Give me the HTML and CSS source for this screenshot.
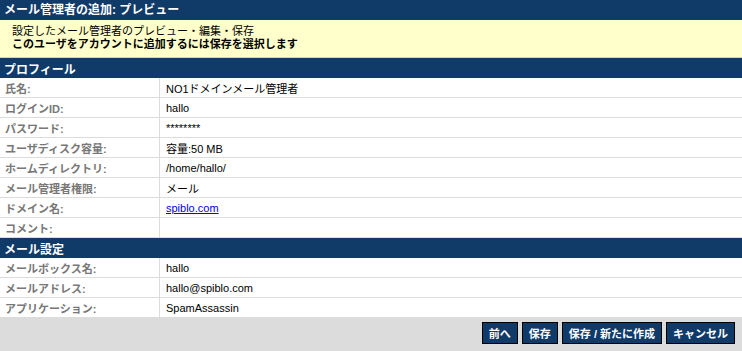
FILE: index.html
```html
<!DOCTYPE html>
<html lang="ja">

<head>
    <meta charset="UTF-8">
    <meta name="viewport" content="width=device-width, initial-scale=1.0">
    <title>メール管理者の追加: プレビュー</title>
    <link rel="stylesheet" href="styles.css">
</head>

<body>
    <div class="page-title">メール管理者の追加: プレビュー</div>

    <div class="notice">
        <p>設定したメール管理者のプレビュー・編集・保存</p>
        <p class="strong">このユーザをアカウントに追加するには保存を選択します</p>
    </div>

    <table class="preview">
        <tr class="section">
            <th colspan="2">プロフィール</th>
        </tr>
        <tr>
            <td class="label">氏名:</td>
            <td class="value">NO1ドメインメール管理者</td>
        </tr>
        <tr>
            <td class="label">ログインID:</td>
            <td class="value">hallo</td>
        </tr>
        <tr>
            <td class="label">パスワード:</td>
            <td class="value">********</td>
        </tr>
        <tr>
            <td class="label">ユーザディスク容量:</td>
            <td class="value">容量:50 MB</td>
        </tr>
        <tr>
            <td class="label">ホームディレクトリ:</td>
            <td class="value">/home/hallo/</td>
        </tr>
        <tr>
            <td class="label">メール管理者権限:</td>
            <td class="value">メール</td>
        </tr>
        <tr>
            <td class="label">ドメイン名:</td>
            <td class="value"><a href="#">spiblo.com</a></td>
        </tr>
        <tr>
            <td class="label">コメント:</td>
            <td class="value"></td>
        </tr>
        <tr class="section">
            <th colspan="2">メール設定</th>
        </tr>
        <tr>
            <td class="label">メールボックス名:</td>
            <td class="value">hallo</td>
        </tr>
        <tr>
            <td class="label">メールアドレス:</td>
            <td class="value">hallo@spiblo.com</td>
        </tr>
        <tr>
            <td class="label">アプリケーション:</td>
            <td class="value">SpamAssassin</td>
        </tr>
    </table>

    <div class="actions">
        <button class="btn">前へ</button>
        <button class="btn">保存</button>
        <button class="btn">保存 / 新たに作成</button>
        <button class="btn">キャンセル</button>
    </div>
</body>

</html>
```

FILE: styles.css
```css
body {
    margin: 0;
    font-family: 'Liberation Sans', 'Noto Sans CJK JP', sans-serif;
    font-size: 11px;
    color: #000;
    background-color: #ffffff;
}

.page-title {
    height: 20px;
    line-height: 20px;
    padding-left: 4px;
    background-color: #103a68;
    color: #ffffff;
    font-size: 12px;
    font-weight: bold;
}

.notice {
    height: 38px;
    padding: 5px 0 0 12px;
    box-sizing: border-box;
    background-color: #ffffcc;
    border-bottom: 1px solid #d0d0d0;
}

.notice p {
    margin: 0;
    line-height: 13px;
}

.notice .strong {
    font-weight: bold;
}

.preview {
    width: 100%;
    border-collapse: collapse;
}

.preview td,
.preview th {
    padding: 0;
    height: 19px;
}

.section th {
    height: 20px;
    padding-left: 4px;
    background-color: #103a68;
    color: #ffffff;
    font-size: 12px;
    font-weight: bold;
    text-align: left;
}

.preview .label {
    width: 154px;
    padding-left: 5px;
    border-right: 1px solid #dcdcdc;
    border-bottom: 1px solid #dcdcdc;
    color: #777777;
    font-weight: bold;
}

.preview .value {
    padding-left: 6px;
    border-bottom: 1px solid #dcdcdc;
}

.value a {
    color: #0000ee;
}

.actions {
    display: flex;
    justify-content: flex-end;
    gap: 4px;
    height: 33px;
    padding: 4px 7px 0 0;
    box-sizing: border-box;
    background-color: #dcdcdc;
}

.btn {
    height: 22px;
    padding: 0 6px;
    border: 1px solid #000000;
    background-color: #103a68;
    color: #ffffff;
    font-family: 'Liberation Sans', 'Noto Sans CJK JP', sans-serif;
    font-size: 11px;
    font-weight: bold;
    cursor: pointer;
}
```
